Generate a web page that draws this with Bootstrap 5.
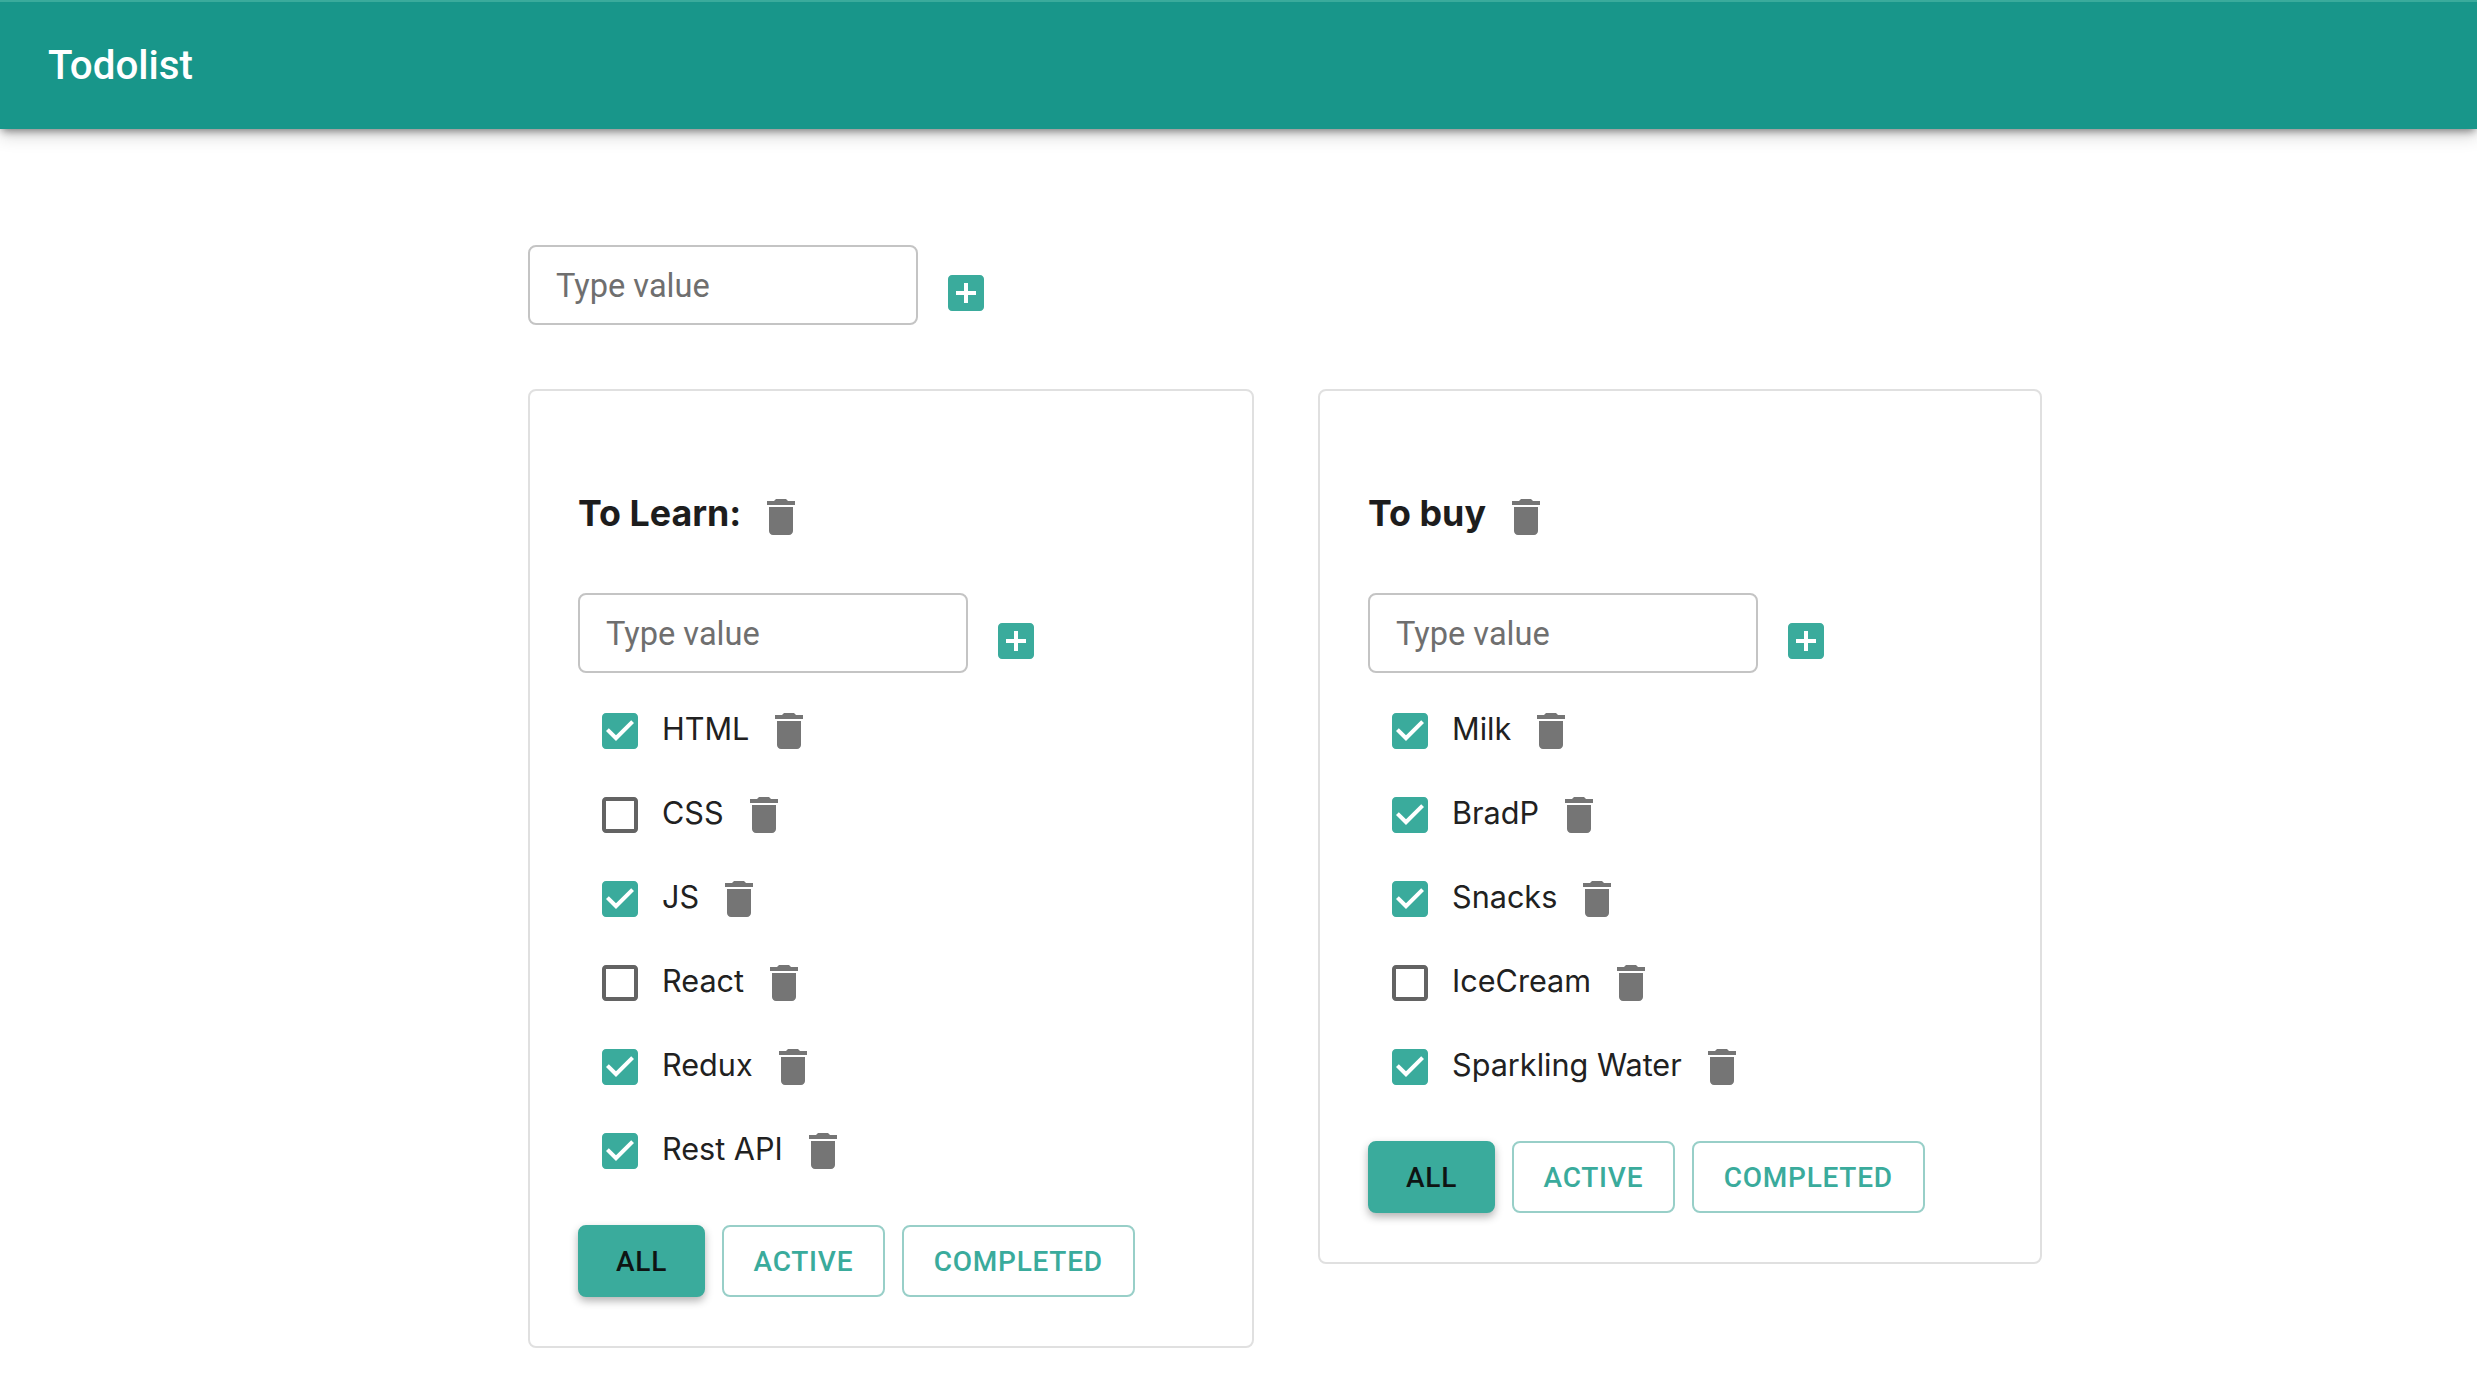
<!DOCTYPE html>
<html lang="en">
<head>
<meta charset="utf-8">
<title>Todolist</title>
<link href="https://cdn.jsdelivr.net/npm/bootstrap@5.3.0/dist/css/bootstrap.min.css" rel="stylesheet">
<style>
body { font-family: Roboto, "Liberation Sans", sans-serif; font-size: 32px; color: #212121; background: #fff; }
.app-bar { height: 129px; padding: 0 48px; background: #18968a; border-top: 2px solid #3aab9c; box-shadow: 0 4px 8px -2px rgba(0,0,0,.45), 0 8px 16px rgba(0,0,0,.14); }
.app-title { margin: 0; padding: 2px 0 0; font-size: 40.3px; font-weight: 500; color: #fff; line-height: 1; }
.page-wrap { padding: 116px 0 40px 528px; }
.value-input.form-control { width: 390px; height: 80px; padding: 2px 26px 0; font-size: 32.6px; color: #212121; border: 2px solid #c4c4c4; border-radius: 8px; box-shadow: none; }
.value-input::placeholder { color: #6f6f6f; opacity: 1; }
.add-row { gap: 24px; }
.add-row .ico { margin-bottom: 8px; }
.ico { width: 48px; height: 48px; flex: none; display: block; }
.ico-trash { fill: #757575; }
.ico-teal { fill: #3aab9c; }
.ico-empty { fill: #636363; }
.boards { margin-top: 64px; gap: 64px; }
.board.card { padding: 102px 48px 49px; border: 2px solid #e0e0e0; border-radius: 8px; }
.board-a { width: 726px; }
.board-b { width: 724px; }
.board-head { gap: 16px; height: 48px; margin-bottom: 52px; }
.board-title { margin: 0; font-size: 35.8px; font-weight: 700; font-family: Inter, Roboto, sans-serif; color: #1d1d1d; line-height: 1; position: relative; top: -3px; }
.todo-list { margin: 16px 0 32px; padding: 0 0 0 18px; list-style: none; }
.todo-item { height: 84px; gap: 18px; font-family: Inter, Roboto, sans-serif; font-size: 30.6px; }
.todo-text { gap: 16px; }
.todo-text span { position: relative; top: -2px; }
.filters { gap: 16.5px; }
.filters .btn { height: 72px; padding: 2px 30px 0; font-size: 28px; font-weight: 500; letter-spacing: .75px; text-transform: uppercase; border-radius: 8px; border: 2px solid #98cfc8; color: #3aab9c; background: #fff; }
.filters .btn.is-on { padding: 2px 36px 0; border-color: #3aab9c; background: #3aab9c; color: #0e1413; box-shadow: 0 4px 8px rgba(0,0,0,.3); }
</style>
</head>
<body>
<svg width="0" height="0" class="position-absolute">
  <symbol id="i-trash" viewBox="0 0 24 24"><path d="M6 19c0 1.1.9 2 2 2h8c1.1 0 2-.9 2-2V7H6v12zM19 4h-3.5l-1-1h-5l-1 1H5v2h14V4z"/></symbol>
  <symbol id="i-add" viewBox="0 0 24 24"><path d="M19 3H5c-1.11 0-2 .9-2 2v14c0 1.1.89 2 2 2h14c1.1 0 2-.9 2-2V5c0-1.1-.9-2-2-2zm-2 10h-4v4h-2v-4H7v-2h4V7h2v4h4v2z"/></symbol>
  <symbol id="i-on" viewBox="0 0 24 24"><path d="M19 3H5c-1.11 0-2 .9-2 2v14c0 1.1.89 2 2 2h14c1.11 0 2-.9 2-2V5c0-1.1-.89-2-2-2zm-9 14l-5-5 1.41-1.41L10 14.17l7.59-7.59L19 8l-9 9z"/></symbol>
  <symbol id="i-off" viewBox="0 0 24 24"><path d="M19 5v14H5V5h14m0-2H5c-1.1 0-2 .9-2 2v14c0 1.1.9 2 2 2h14c1.1 0 2-.9 2-2V5c0-1.1-.9-2-2-2z"/></symbol>
</svg>

<nav class="navbar app-bar">
  <span class="navbar-brand app-title">Todolist</span>
</nav>

<main class="page-wrap">
  <div class="d-flex align-items-end add-row">
    <input class="form-control value-input" placeholder="Type value">
    <svg class="ico ico-teal"><use href="#i-add"/></svg>
  </div>

  <div class="d-flex align-items-start boards">
    <section class="card board board-a">
      <div class="d-flex align-items-center board-head">
        <h3 class="board-title">To Learn:</h3>
        <svg class="ico ico-trash"><use href="#i-trash"/></svg>
      </div>
      <div class="d-flex align-items-end add-row">
        <input class="form-control value-input" placeholder="Type value">
        <svg class="ico ico-teal"><use href="#i-add"/></svg>
      </div>
      <ul class="todo-list">
        <li class="d-flex align-items-center todo-item"><svg class="ico ico-teal"><use href="#i-on"/></svg><div class="d-flex align-items-center todo-text"><span>HTML</span><svg class="ico ico-trash"><use href="#i-trash"/></svg></div></li>
        <li class="d-flex align-items-center todo-item"><svg class="ico ico-empty"><use href="#i-off"/></svg><div class="d-flex align-items-center todo-text"><span>CSS</span><svg class="ico ico-trash"><use href="#i-trash"/></svg></div></li>
        <li class="d-flex align-items-center todo-item"><svg class="ico ico-teal"><use href="#i-on"/></svg><div class="d-flex align-items-center todo-text"><span>JS</span><svg class="ico ico-trash"><use href="#i-trash"/></svg></div></li>
        <li class="d-flex align-items-center todo-item"><svg class="ico ico-empty"><use href="#i-off"/></svg><div class="d-flex align-items-center todo-text"><span>React</span><svg class="ico ico-trash"><use href="#i-trash"/></svg></div></li>
        <li class="d-flex align-items-center todo-item"><svg class="ico ico-teal"><use href="#i-on"/></svg><div class="d-flex align-items-center todo-text"><span>Redux</span><svg class="ico ico-trash"><use href="#i-trash"/></svg></div></li>
        <li class="d-flex align-items-center todo-item"><svg class="ico ico-teal"><use href="#i-on"/></svg><div class="d-flex align-items-center todo-text"><span>Rest API</span><svg class="ico ico-trash"><use href="#i-trash"/></svg></div></li>
      </ul>
      <div class="d-flex filters">
        <button class="btn is-on">All</button>
        <button class="btn">Active</button>
        <button class="btn">Completed</button>
      </div>
    </section>

    <section class="card board board-b">
      <div class="d-flex align-items-center board-head">
        <h3 class="board-title">To buy</h3>
        <svg class="ico ico-trash"><use href="#i-trash"/></svg>
      </div>
      <div class="d-flex align-items-end add-row">
        <input class="form-control value-input" placeholder="Type value">
        <svg class="ico ico-teal"><use href="#i-add"/></svg>
      </div>
      <ul class="todo-list">
        <li class="d-flex align-items-center todo-item"><svg class="ico ico-teal"><use href="#i-on"/></svg><div class="d-flex align-items-center todo-text"><span>Milk</span><svg class="ico ico-trash"><use href="#i-trash"/></svg></div></li>
        <li class="d-flex align-items-center todo-item"><svg class="ico ico-teal"><use href="#i-on"/></svg><div class="d-flex align-items-center todo-text"><span>BradP</span><svg class="ico ico-trash"><use href="#i-trash"/></svg></div></li>
        <li class="d-flex align-items-center todo-item"><svg class="ico ico-teal"><use href="#i-on"/></svg><div class="d-flex align-items-center todo-text"><span>Snacks</span><svg class="ico ico-trash"><use href="#i-trash"/></svg></div></li>
        <li class="d-flex align-items-center todo-item"><svg class="ico ico-empty"><use href="#i-off"/></svg><div class="d-flex align-items-center todo-text"><span>IceCream</span><svg class="ico ico-trash"><use href="#i-trash"/></svg></div></li>
        <li class="d-flex align-items-center todo-item"><svg class="ico ico-teal"><use href="#i-on"/></svg><div class="d-flex align-items-center todo-text"><span>Sparkling Water</span><svg class="ico ico-trash"><use href="#i-trash"/></svg></div></li>
      </ul>
      <div class="d-flex filters">
        <button class="btn is-on">All</button>
        <button class="btn">Active</button>
        <button class="btn">Completed</button>
      </div>
    </section>
  </div>
</main>
</body>
</html>
